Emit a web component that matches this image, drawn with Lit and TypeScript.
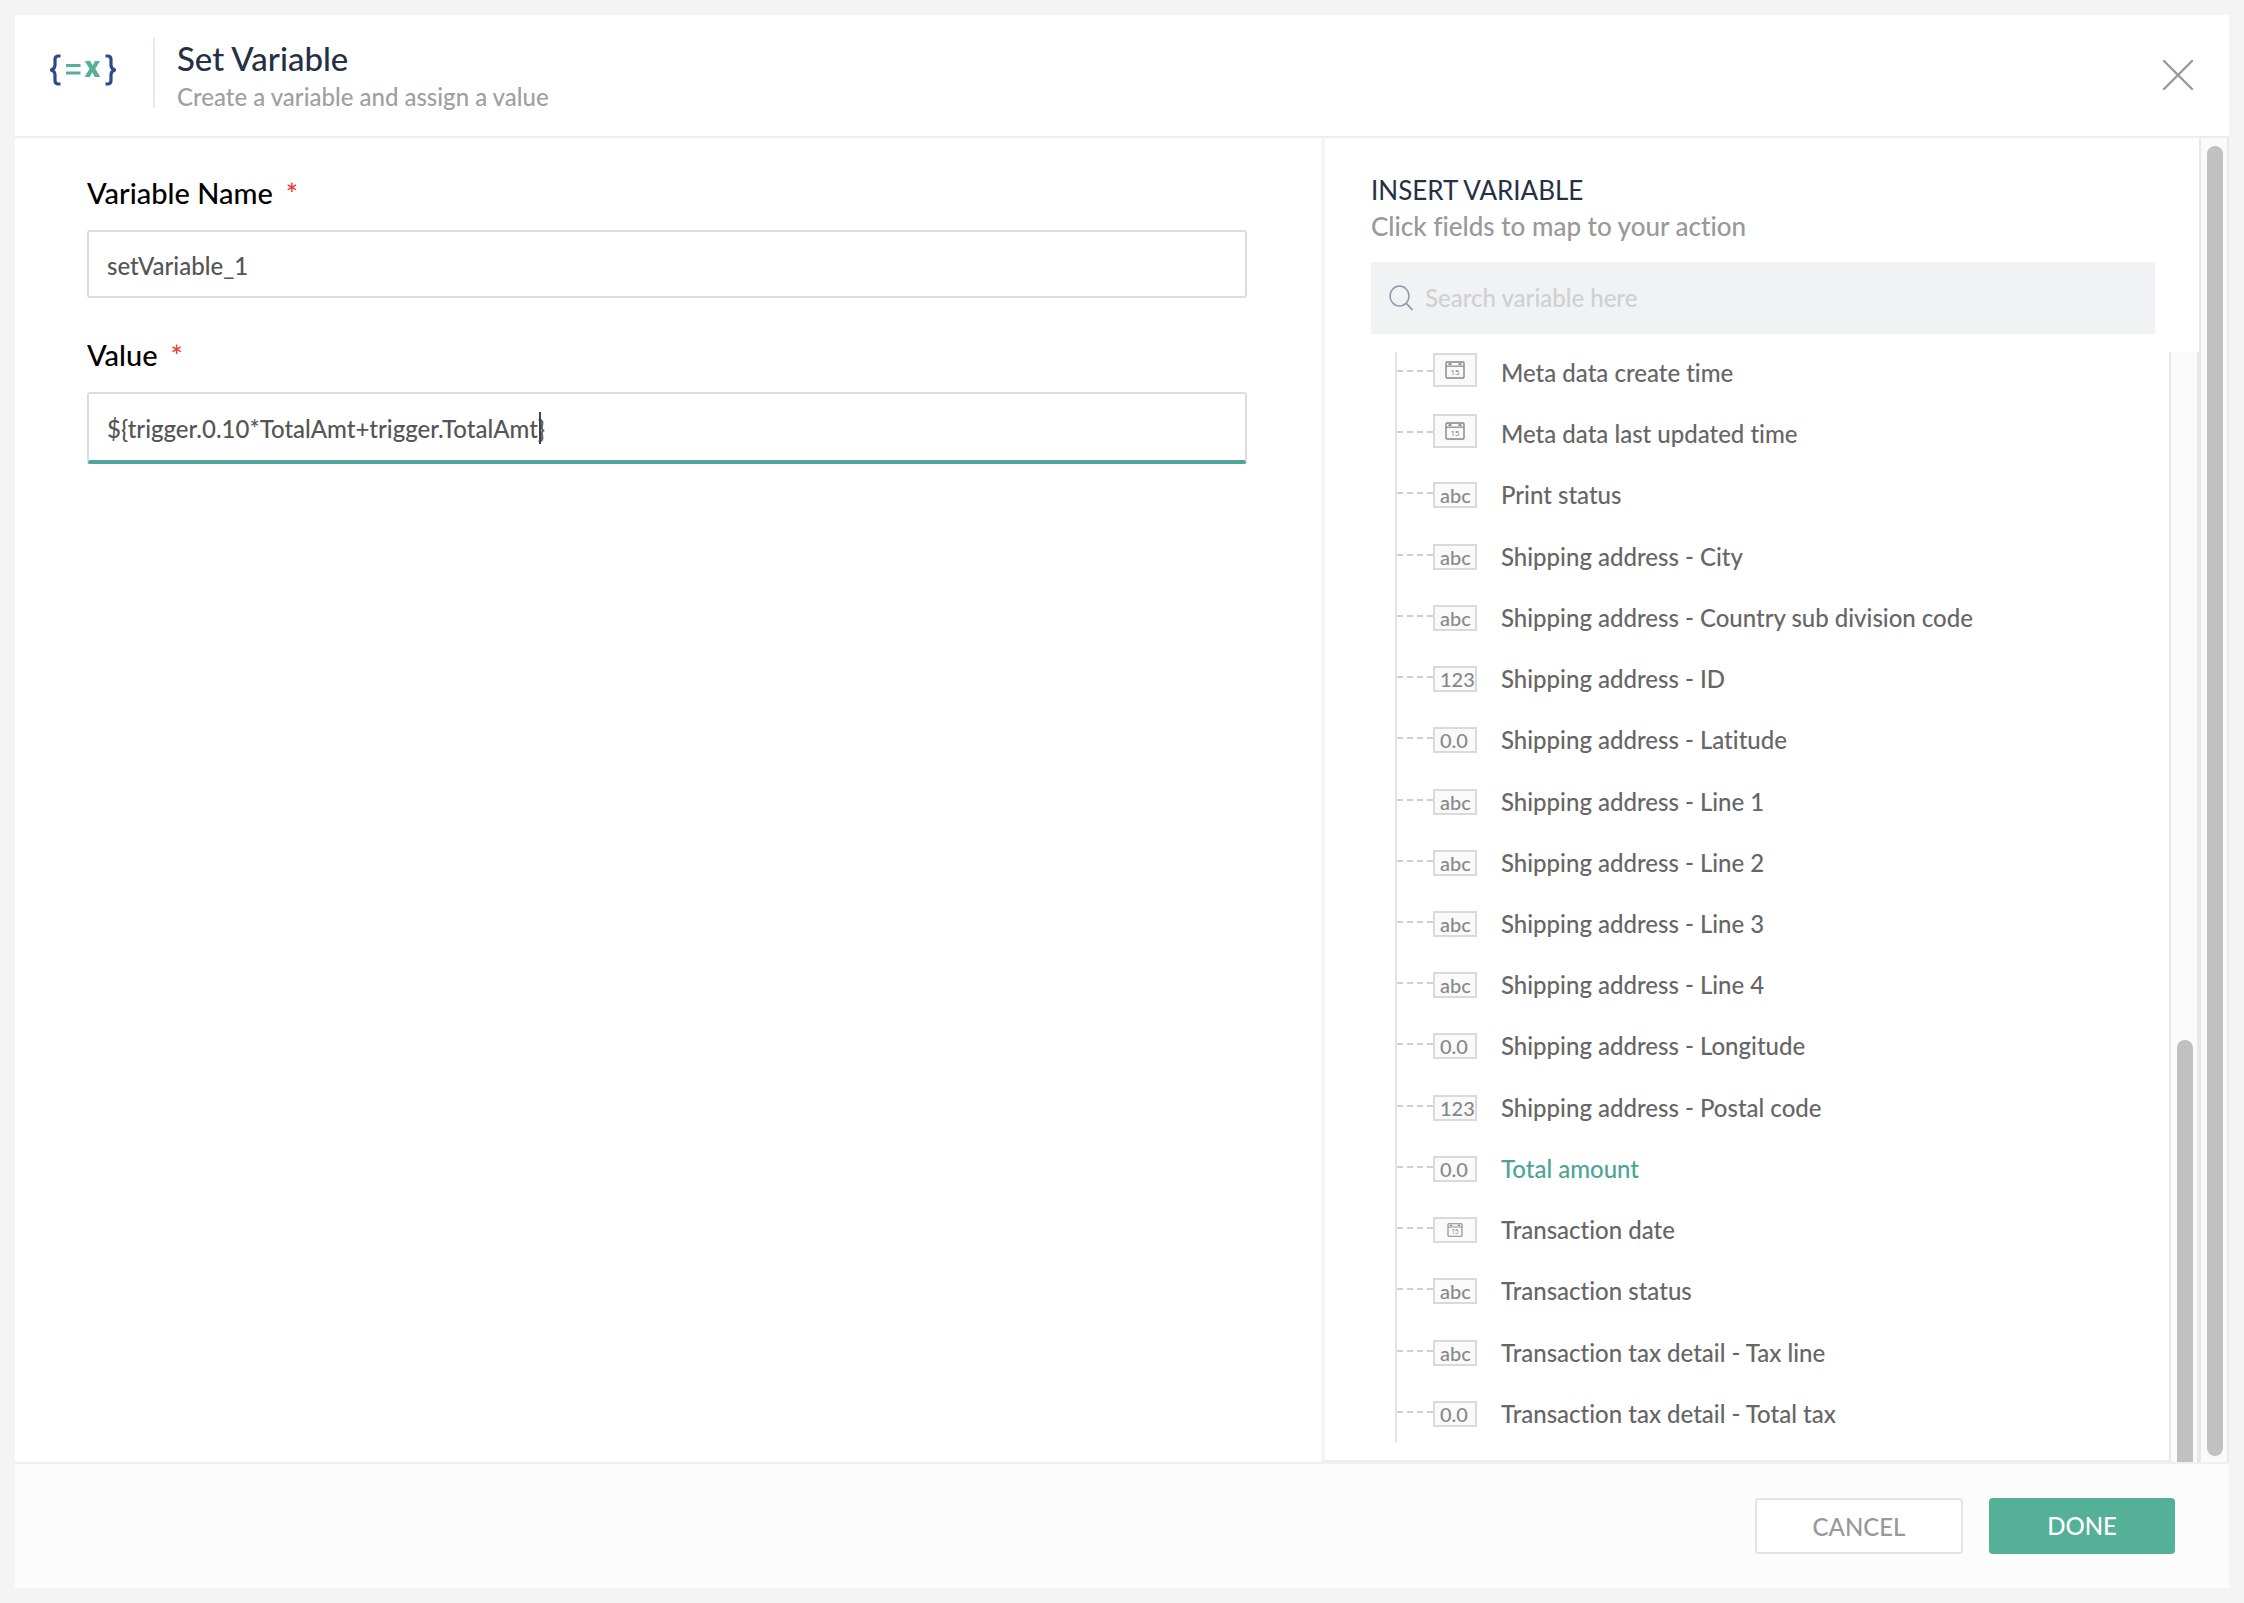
import { LitElement, html, css, svg, nothing } from "lit";
import { customElement, property } from "lit/decorators.js";
import { classMap } from "lit/directives/class-map.js";

type Kind = "datetime" | "date" | "abc" | "123" | "0.0";
interface Variable {
  label: string;
  kind: Kind;
  active?: boolean;
}

const VARIABLES: Variable[] = [
  { label: "Meta data create time", kind: "datetime" },
  { label: "Meta data last updated time", kind: "datetime" },
  { label: "Print status", kind: "abc" },
  { label: "Shipping address - City", kind: "abc" },
  { label: "Shipping address - Country sub division code", kind: "abc" },
  { label: "Shipping address - ID", kind: "123" },
  { label: "Shipping address - Latitude", kind: "0.0" },
  { label: "Shipping address - Line 1", kind: "abc" },
  { label: "Shipping address - Line 2", kind: "abc" },
  { label: "Shipping address - Line 3", kind: "abc" },
  { label: "Shipping address - Line 4", kind: "abc" },
  { label: "Shipping address - Longitude", kind: "0.0" },
  { label: "Shipping address - Postal code", kind: "123" },
  { label: "Total amount", kind: "0.0", active: true },
  { label: "Transaction date", kind: "date" },
  { label: "Transaction status", kind: "abc" },
  { label: "Transaction tax detail - Tax line", kind: "abc" },
  { label: "Transaction tax detail - Total tax", kind: "0.0" },
];

@customElement("type-badge")
export class TypeBadge extends LitElement {
  @property() kind: Kind = "abc";

  static styles = css`
    :host {
      display: block;
      flex: none;
    }
    .badge {
      box-sizing: border-box;
      display: flex;
      align-items: center;
      width: 44px;
      height: 26px;
      padding-left: 5px;
      border: 2px solid #dadada;
      background: #fafafa;
      color: #888;
      font-size: 20px;
      line-height: 22px;
      overflow: hidden;
    }
    .picture {
      justify-content: center;
      padding-left: 0;
    }
    .tall {
      height: 34px;
    }
    .calendar {
      display: block;
      width: 20px;
      height: 18px;
    }
    .small {
      width: 16px;
      height: 14px;
    }
    .digits {
      font: 8px "Open Sans", sans-serif;
    }
  `;

  render() {
    const isDate = this.kind === "date" || this.kind === "datetime";
    return html`<span class=${classMap({ badge: true, picture: isDate, tall: this.kind === "datetime" })}>
      ${isDate
        ? html`<svg class=${classMap({ calendar: true, small: this.kind === "date" })} viewBox="0 0 20 18">
            ${svg`<rect x="1" y="1" width="18" height="16" rx="1" fill="none" stroke="#858585" stroke-width="1.4"/>
            <path d="M1 5.200H19" stroke="#858585" stroke-width="1.2"/>
            <path d="M3.500 3.100H6.500M13.500 3.100H16.500" stroke="#858585" stroke-width="1.600"/>
            <text class="digits" x="10" y="14" text-anchor="middle" fill="#777">15</text>`}
          </svg>`
        : this.kind}
    </span>`;
  }
}

@customElement("variable-row")
export class VariableRow extends LitElement {
  @property({ attribute: false }) item!: Variable;

  static styles = css`
    :host {
      display: block;
    }
    .row {
      box-sizing: border-box;
      display: flex;
      align-items: flex-start;
      width: 100%;
      height: 100%;
      margin: 0;
      padding: 0;
      border: 0;
      border-left: 2px solid #e3e3e3;
      background: none;
      color: #666;
      font: 500 24px/32px Lato, sans-serif;
      font-variant-ligatures: no-common-ligatures;
      text-align: left;
      cursor: pointer;
    }
    .branch {
      flex: none;
      width: 36px;
      margin-top: 30px;
      border-top: 2px dashed #cfcfcf;
    }
    .icon {
      padding-top: 20px;
    }
    .icon-tall {
      padding-top: 13px;
    }
    .label {
      padding: 17px 0 0 24px;
      white-space: nowrap;
    }
    .active {
      color: #4da496;
    }
  `;

  render() {
    const { label, kind, active } = this.item;
    return html`<button class="row" type="button">
      <span class="branch"></span>
      <type-badge class=${kind === "datetime" ? "icon-tall" : "icon"} .kind=${kind}></type-badge>
      <span class=${classMap({ label: true, active: !!active })}>${label}</span>
    </button>`;
  }
}

@customElement("form-field")
export class FormField extends LitElement {
  @property() label = "";
  @property() value = "";
  @property({ type: Boolean }) editing = false;

  static styles = css`
    :host {
      display: block;
    }
    .label {
      display: flex;
      gap: 13px;
      margin-bottom: 19px;
      color: #000;
      font-size: 29px;
      line-height: 36px;
    }
    .required {
      color: #f0372a;
    }
    .control {
      position: relative;
      display: flex;
    }
    .input {
      box-sizing: border-box;
      width: 100%;
      height: 68px;
      padding: 2px 18px 0;
      border: 2px solid #dcdcdc;
      border-radius: 3px;
      outline: 0;
      background: #fff;
      color: #555;
      font: 500 24px/32px Lato, sans-serif;
      font-variant-ligatures: no-common-ligatures;
    }
    .editing {
      height: 72px;
      border-bottom: 4px solid #4fa59a;
    }
    .caret {
      position: absolute;
      top: 20px;
      left: 452px;
      width: 2px;
      height: 32px;
      background: #444;
    }
  `;

  render() {
    return html`<label class="label" for="field">${this.label}<span class="required">*</span></label>
      <div class="control">
        <input
          id="field"
          type="text"
          required
          class=${classMap({ input: true, editing: this.editing })}
          .value=${this.value}
        />
        ${this.editing ? html`<span class="caret"></span>` : nothing}
      </div>`;
  }
}

@customElement("app-root")
export class AppRoot extends LitElement {
  static styles = css`
    :host {
      box-sizing: border-box;
      display: flex;
      min-height: 100vh;
      padding: 15px;
      background: #f4f4f4;
      font-family: Lato, sans-serif;
      font-weight: 500;
      font-variant-ligatures: no-common-ligatures;
    }
    .dialog {
      flex: 1;
      display: flex;
      flex-direction: column;
      min-width: 0;
      background: #fff;
    }
    .header {
      display: flex;
      align-items: flex-start;
      padding: 23px 34px 28px 35px;
      border-bottom: 2px solid #ededed;
    }
    .logo {
      flex: none;
      width: 66px;
      height: 34px;
      margin-top: 14px;
    }
    .heading {
      flex: 1;
      margin-left: 37px;
      padding-left: 22px;
      border-left: 2px solid #e6eaf5;
    }
    .title {
      margin: 0;
      color: #272f45;
      font-size: 33px;
      font-weight: 500;
      line-height: 40px;
    }
    .subtitle {
      margin: 0;
      padding-top: 8px;
      color: #9f9f9f;
      font-size: 24px;
      line-height: 22px;
    }
    .close {
      display: block;
      margin-top: 14px;
      padding: 0;
      border: 0;
      background: none;
      cursor: pointer;
    }
    .close-icon {
      display: block;
      width: 34px;
      height: 46px;
    }
    .body {
      flex: 1;
      display: grid;
      grid-template-columns: 653fr 439fr 30px;
      min-height: 0;
    }
    .form {
      display: flex;
      flex-direction: column;
      gap: 39px;
      padding: 37px 74px 37px 72px;
    }
    .panel {
      display: flex;
      flex-direction: column;
      min-height: 0;
      border-left: 4px solid #f4f4f4;
    }
    .panel-head {
      padding: 34px 44px 18px 46px;
    }
    .panel-title {
      margin: 0;
      color: #272f45;
      font-size: 26px;
      font-weight: 400;
      line-height: 36px;
    }
    .panel-hint {
      margin: 0 0 18px;
      color: #999;
      font-size: 26px;
      line-height: 36px;
    }
    .search {
      display: flex;
      align-items: center;
      gap: 12px;
      height: 72px;
      padding: 0 18px;
      background: #f0f2f4;
    }
    .search-icon {
      flex: none;
      width: 24px;
      height: 26px;
    }
    .search-input {
      flex: 1;
      min-width: 0;
      padding: 0;
      border: 0;
      outline: 0;
      background: none;
      color: #555;
      font: 500 24px/32px Lato, sans-serif;
    }
    .search-input::placeholder {
      color: #cfd0d1;
      opacity: 1;
    }
    .list-area {
      flex: 1;
      display: flex;
      min-height: 0;
      overflow: hidden;
    }
    .list-view {
      flex: 1;
      display: flex;
      min-width: 0;
      overflow: hidden;
      border-bottom: 2px solid #ededed;
    }
    .list {
      flex: 1;
      display: flex;
      flex-direction: column;
      margin: -12px 0 18px;
      padding: 0 0 0 70px;
      list-style: none;
    }
    .item {
      flex: 1;
      display: grid;
    }
    .track {
      box-sizing: border-box;
      display: flex;
      flex-direction: column;
      width: 30px;
      padding: 8px 4px 6px 6px;
      border: solid #e8e8e8;
      border-width: 0 2px;
      background: #fafafa;
    }
    .thumb {
      flex: 1;
      border-radius: 8px;
      background: #c1c1c1;
    }
    .track-inner {
      justify-content: flex-end;
      padding: 0 4px 0 6px;
    }
    .thumb-inner {
      flex: 0 0 38%;
      border-radius: 8px 8px 0 0;
    }
    .footer {
      display: flex;
      justify-content: flex-end;
      gap: 26px;
      padding: 34px 54px;
      border-top: 2px solid #f0f0f0;
      background: #fcfcfc;
    }
    .button {
      box-sizing: border-box;
      height: 56px;
      padding: 0;
      border: 2px solid #e3e3e3;
      border-radius: 4px;
      font: 500 24px/32px Lato, sans-serif;
      cursor: pointer;
    }
    .cancel {
      width: 208px;
      padding-top: 2px;
      background: #fff;
      color: #999;
    }
    .done {
      width: 186px;
      border-color: #54b096;
      background: #54b096;
      color: #fff;
    }
  `;

  render() {
    return html`<main class="dialog">
      <header class="header">
        <svg class="logo" viewBox="0 0 66 34" aria-hidden="true">
          <g fill="none" stroke="#2b4a8b" stroke-width="3.200">
            <path d="M10.500 4H8.500Q5 4 5 7.500V13Q5 17 1.200 18Q5 19 5 23V28.500Q5 32 8.500 32H10.500" />
            <path d="M55.500 4H57.500Q61 4 61 7.500V13Q61 17 64.800 18Q61 19 61 23V28.500Q61 32 57.500 32H55.500" />
          </g>
          <path d="M16 13.500H30.500M16 21H30.500" stroke="#54b096" stroke-width="2.800" />
          <path d="M34.800 9H40.200L42.600 13.600L45 9H50L45.300 16.800L50.300 25H44.800L42.300 20.200L39.800 25H34.500L39.600 16.800Z" fill="#54b096" />
        </svg>
        <div class="heading">
          <h1 class="title">Set Variable</h1>
          <p class="subtitle">Create a variable and assign a value</p>
        </div>
        <button class="close" type="button" aria-label="Close">
          <svg class="close-icon" viewBox="0 0 34 46">
            <path d="M3 9L31 37M31 9L3 37" stroke="#999" stroke-width="2.400" stroke-linecap="round" />
          </svg>
        </button>
      </header>
      <div class="body">
        <form class="form">
          <form-field label="Variable Name" value="setVariable_1"></form-field>
          <form-field label="Value" value="\${trigger.0.10*TotalAmt+trigger.TotalAmt}" editing></form-field>
        </form>
        <aside class="panel">
          <div class="panel-head">
            <h2 class="panel-title">INSERT VARIABLE</h2>
            <p class="panel-hint">Click fields to map to your action</p>
            <label class="search">
              <svg class="search-icon" viewBox="0 0 24 26" aria-hidden="true">
                <ellipse cx="10.500" cy="11" rx="9.500" ry="10" fill="none" stroke="#8f99b0" stroke-width="1.600" />
                <path d="M17 18L23.500 25" stroke="#8f99b0" stroke-width="1.800" />
              </svg>
              <input class="search-input" type="text" placeholder="Search variable here" aria-label="Search variable here" />
            </label>
          </div>
          <div class="list-area">
            <div class="list-view">
              <ul class="list">
                ${VARIABLES.map((v) => html`<li class="item"><variable-row .item=${v}></variable-row></li>`)}
              </ul>
            </div>
            <div class="track track-inner"><div class="thumb thumb-inner"></div></div>
          </div>
        </aside>
        <div class="track"><div class="thumb"></div></div>
      </div>
      <footer class="footer">
        <button class="button cancel" type="button">CANCEL</button>
        <button class="button done" type="button">DONE</button>
      </footer>
    </main>`;
  }
}
